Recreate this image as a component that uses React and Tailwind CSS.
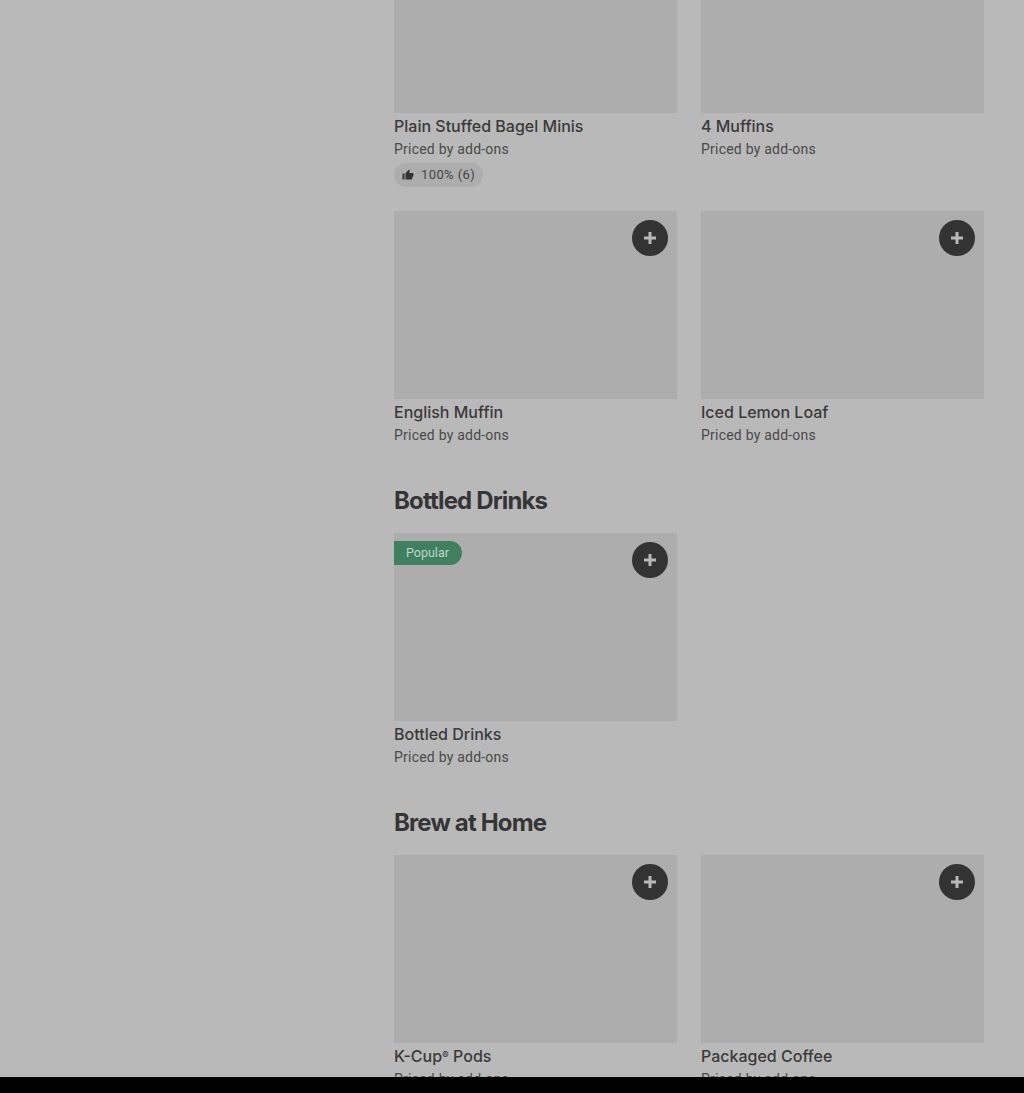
import React from "react";

const Card = ({ title, imageClass = "h-[188px]", hasAdd = true, popular = false, rating }) => {
  return (
    <div>
      <div className={`relative bg-[#adadad] ${imageClass}`}>
        {popular ? (
          <div className="absolute left-0 top-2 h-6 pl-3 pr-[13px] flex items-center rounded-r-full bg-[#3f8060] text-[#c4d4cb] text-[12.5px] font-['Roboto',sans-serif]">
            Popular
          </div>
        ) : (
          ""
        )}
        {hasAdd ? (
          <button className="absolute right-[9px] top-[9px] w-9 h-9 rounded-full bg-[#333333] flex items-center justify-center">
            <svg width="12" height="12" viewBox="0 0 12 12" fill="#b9b9b9">
              <path d="M4.5 0h3v4.5H12v3H7.5V12h-3V7.5H0v-3h4.5z" />
            </svg>
          </button>
        ) : (
          ""
        )}
      </div>
      <div className="pt-[3px] text-[16px] leading-5 font-medium text-[#3a3a3a]">{title}</div>
      <div className="mt-[3px] text-[14px] leading-5 tracking-[0.22px] text-[#494949] font-['Roboto',sans-serif]">Priced by add-ons</div>
      {rating ? (
        <div className="mt-1 h-6 w-[89px] rounded-full bg-[#adadad] flex items-center pl-2 gap-[7px] text-[13px] tracking-[0.4px] text-[#444444] font-['Roboto',sans-serif]">
          <svg width="12" height="12" viewBox="0 0 24 24" fill="#333333">
            <path d="M1 21h4V9H1v12zm22-11c0-1.1-.9-2-2-2h-6.31l.95-4.57.03-.32c0-.41-.17-.79-.44-1.06L14.17 1 7.59 7.59C7.22 7.95 7 8.45 7 9v10c0 1.1.9 2 2 2h9c.83 0 1.54-.5 1.84-1.22l3.02-7.05c.09-.23.14-.47.14-.73v-2z" />
          </svg>
          <span>{rating}</span>
        </div>
      ) : (
        ""
      )}
    </div>
  );
};

const Section = ({ title, children }) => {
  return (
    <section className="mt-10">
      <h2 className="h-8 mb-4 text-[24px] leading-8 font-bold tracking-[-0.85px] text-[#353535]">{title}</h2>
      <div className="grid grid-cols-[283px_283px] gap-x-6">{children}</div>
    </section>
  );
};

export default function App() {
  return (
    <div className="h-[1093px] overflow-hidden font-['Inter',sans-serif]">
      <main className="h-[1077px] overflow-hidden bg-[#b9b9b9] pl-[394px]">
        <div className="grid grid-cols-[283px_283px] gap-x-6 gap-y-6">
          <Card title="Plain Stuffed Bagel Minis" imageClass="h-[113px]" hasAdd={false} rating="100% (6)" />
          <Card title="4 Muffins" imageClass="h-[113px]" hasAdd={false} />
          <Card title="English Muffin" />
          <Card title="Iced Lemon Loaf" />
        </div>
        <Section title="Bottled Drinks">
          <Card title="Bottled Drinks" popular />
        </Section>
        <Section title="Brew at Home">
          <Card title={<>K-Cup<span className="text-[10px] leading-[0] align-[3px]">®</span> Pods</>} />
          <Card title="Packaged Coffee" />
        </Section>
      </main>
      <div className="h-4 bg-black"></div>
    </div>
  );
}
